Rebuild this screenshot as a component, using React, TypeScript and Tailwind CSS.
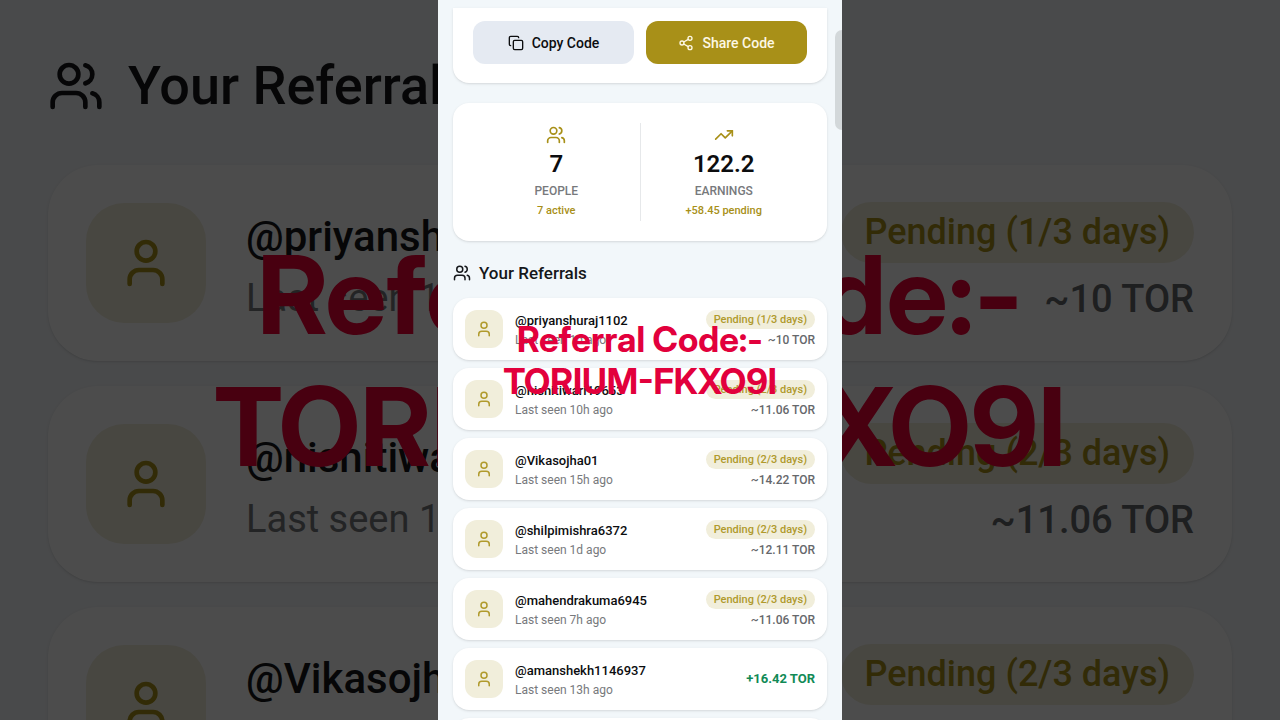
import React from 'react';
import { Copy, Share2, TrendingUp, User, Users } from 'lucide-react';

interface Referral {
    name: string;
    seen: string;
    amount: string;
    pending?: string;
}

const referrals: Referral[] = [
    { name: '@priyanshuraj1102', seen: 'Last seen 1d ago', amount: '~10 TOR', pending: 'Pending (1/3 days)' },
    { name: '@nishitiwari19653', seen: 'Last seen 10h ago', amount: '~11.06 TOR', pending: 'Pending (2/3 days)' },
    { name: '@Vikasojha01', seen: 'Last seen 15h ago', amount: '~14.22 TOR', pending: 'Pending (2/3 days)' },
    { name: '@shilpimishra6372', seen: 'Last seen 1d ago', amount: '~12.11 TOR', pending: 'Pending (2/3 days)' },
    { name: '@mahendrakuma6945', seen: 'Last seen 7h ago', amount: '~11.06 TOR', pending: 'Pending (2/3 days)' },
    { name: '@amanshekh1146937', seen: 'Last seen 13h ago', amount: '+16.42 TOR' },
];

function ReferralRow({ item }: { item: Referral }) {
    return (
        <li className="flex h-[62px] shrink-0 items-center gap-3 rounded-2xl bg-white px-3 shadow-sm">
            <div className="flex size-[38px] items-center justify-center rounded-xl bg-[#f1eedb]">
                <User size={18} className="text-[#b09a2c]" />
            </div>
            <div className="flex-1 pt-px">
                <p className="text-[13px] leading-5 font-medium text-[#0c0d0f]">{item.name}</p>
                <p className="text-xs leading-[18px] text-[#77797c]">{item.seen}</p>
            </div>
            {item.pending ? (
                <div className="flex flex-col items-end gap-0.5">
                    <span className="rounded-full bg-[#f1eedb] px-2 text-[11px] leading-[19px] font-medium text-[#b09a2c]">
                        {item.pending}
                    </span>
                    <span className="text-xs leading-[18px] font-medium text-[#66686b]">{item.amount}</span>
                </div>
            ) : (
                <span className="text-[13px] leading-5 font-bold text-[#118a56]">{item.amount}</span>
            )}
        </li>
    );
}

function BackdropRow({ item }: { item: Referral }) {
    return (
        <div className="flex h-[196px] shrink-0 items-center gap-10 rounded-[50px] bg-white px-[38px] shadow-sm">
            <div className="flex size-[120px] items-center justify-center rounded-[38px] bg-[#f1eedb]">
                <User size={56} className="text-[#a89018]" />
            </div>
            <div className="flex-1 pt-2">
                <p className="text-[42px] leading-[62px] font-medium text-[#15171a]">{item.name}</p>
                <p className="text-[38px] leading-[60px] text-[#77797c]">{item.seen}</p>
            </div>
            <div className="flex flex-col items-end gap-1.5 pt-1">
                <span className="rounded-full bg-[#f1eedb] px-6 text-[36px] leading-[61px] font-medium text-[#a89018]">
                    {item.pending}
                </span>
                <span className="text-[38px] leading-[60px] font-medium text-[#66686b]">{item.amount}</span>
            </div>
        </div>
    );
}

function Backdrop() {
    return (
        <div aria-hidden="true" className="absolute inset-0 overflow-hidden bg-[#f4f7fa]">
            <div className="flex flex-col px-12 pt-12">
                <div className="flex items-center gap-6 pb-[41px]">
                    <Users size={56} className="text-[#15171a]" />
                    <p className="text-[54px] leading-[76px] font-medium text-[#15171a]">Your Referrals</p>
                </div>
                <div className="flex flex-col gap-[25px]">
                    {referrals.slice(0, 3).map((item) => (
                        <BackdropRow key={item.name} item={item} />
                    ))}
                </div>
            </div>
            <div className="absolute inset-0 flex items-center justify-center text-center font-['Inter_Display','Inter',sans-serif] text-[109px] leading-[132px] font-bold text-[#f00038]">
                <p>
                    Referral Code:-
                    <br />
                    TORIUM-FKXO9I
                </p>
            </div>
            <div className="absolute inset-0 bg-black/70" />
        </div>
    );
}

export default function App() {
    return (
        <div className="relative h-screen overflow-hidden font-['Roboto',sans-serif]">
            <Backdrop />

            <main className="relative mx-auto flex h-full w-full max-w-[404px] flex-col overflow-hidden bg-[#f2f7fa] px-[15px] pt-2">
                <section className="flex shrink-0 gap-3 rounded-b-2xl bg-white px-5 pt-[13px] pb-[19px] shadow-sm">
                    <button className="flex h-[43px] flex-1 items-center justify-center gap-2 rounded-xl bg-[#e5eaf2] text-sm font-medium text-[#0c0d0f]">
                        <Copy size={16} />
                        Copy Code
                    </button>
                    <button className="flex h-[43px] flex-1 items-center justify-center gap-2 rounded-xl bg-[#a89018] text-sm font-medium text-[#fdf8e4]">
                        <Share2 size={16} />
                        Share Code
                    </button>
                </section>

                <section className="mt-5 flex shrink-0 rounded-2xl bg-white px-5 py-5 shadow-sm">
                    <div className="flex flex-1 flex-col items-center gap-1 py-0.5">
                        <Users size={20} className="text-[#a89018]" />
                        <p className="text-2xl leading-[30px] font-semibold text-[#0c0d0f]">7</p>
                        <p className="text-xs leading-4 font-medium text-[#77797c]">PEOPLE</p>
                        <p className="text-[11px] leading-4 font-medium text-[#a89018]">7 active</p>
                    </div>
                    <div className="w-px bg-[#e6e8ea]" />
                    <div className="flex flex-1 flex-col items-center gap-1 py-0.5">
                        <TrendingUp size={20} className="text-[#a89018]" />
                        <p className="text-2xl leading-[30px] font-semibold text-[#0c0d0f]">122.2</p>
                        <p className="text-xs leading-4 font-medium text-[#77797c]">EARNINGS</p>
                        <p className="text-[11px] leading-4 font-medium text-[#a89018]">+58.45 pending</p>
                    </div>
                </section>

                <h2 className="mt-5 mb-[13px] flex shrink-0 items-center gap-2 text-[17px] leading-6 font-medium text-[#15171a]">
                    <Users size={18} />
                    Your Referrals
                </h2>

                <ul className="flex flex-col gap-2">
                    {referrals.map((item) => (
                        <ReferralRow key={item.name} item={item} />
                    ))}
                    {/* top edge of the next card in the list */}
                    <li className="h-[62px] shrink-0 rounded-2xl bg-white shadow-sm" />
                </ul>

                {/* scroll thumb */}
                <div className="absolute top-[30px] right-0 h-[100px] w-[7px] rounded-l-lg bg-[#d3d8da]" />

                <div className="absolute inset-0 flex items-center justify-center text-center font-['Inter_Display','Inter',sans-serif] text-[35px] leading-[42px] font-bold whitespace-nowrap text-[#e2003c]">
                    <p>
                        Referral Code:-
                        <br />
                        TORIUM-FKXO9I
                    </p>
                </div>
            </main>
        </div>
    );
}
